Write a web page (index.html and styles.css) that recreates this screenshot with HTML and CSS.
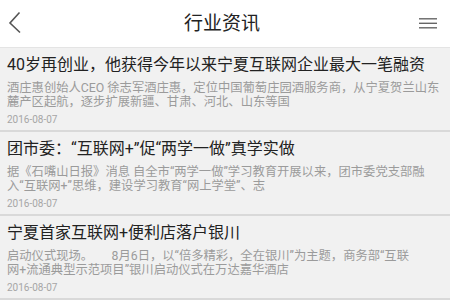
FILE: index.html
```html
<!DOCTYPE html>
<html lang="zh-CN">
<head>
<meta charset="utf-8">
<title>行业资讯</title>
<link rel="stylesheet" href="styles.css">
</head>
<body>
<header class="topbar">
  <svg class="back" width="16" height="26" viewBox="0 0 16 26"><polyline points="13.5,1.5 4,12 14,21.5" fill="none" stroke="#555" stroke-width="1.6"/></svg>
  <h1 class="title">行业资讯</h1>
  <svg class="menu" width="20" height="14" viewBox="0 0 20 14"><g stroke="#666" stroke-width="1.4"><line x1="1" y1="1.8" x2="19" y2="1.8"/><line x1="1" y1="6.3" x2="19" y2="6.3"/><line x1="1" y1="10.8" x2="19" y2="10.8"/></g></svg>
</header>
<main class="list">
  <article class="item">
    <h2 class="item-title">40岁再创业，他获得今年以来宁夏互联网企业最大一笔融资</h2>
    <p class="item-desc">酒庄惠创始人CEO 徐志军酒庄惠，定位中国葡萄庄园酒服务商，从宁夏贺兰山东<br>麓产区起航，逐步扩展新疆、甘肃、河北、山东等国</p>
    <div class="item-date">2016-08-07</div>
  </article>
  <article class="item">
    <h2 class="item-title">团市委：“互联网+”促“两学一做”真学实做</h2>
    <p class="item-desc">据《石嘴山日报》消息 自全市“两学一做”学习教育开展以来，团市委党支部融<br>入“互联网+”思维，建设学习教育“网上学堂”、志</p>
    <div class="item-date">2016-08-07</div>
  </article>
  <article class="item">
    <h2 class="item-title">宁夏首家互联网+便利店落户银川</h2>
    <p class="item-desc">启动仪式现场。　　8月6日，以“倍多精彩，全在银川”为主题，商务部“互联<br>网+流通典型示范项目”银川启动仪式在万达嘉华酒店</p>
    <div class="item-date">2016-08-07</div>
  </article>
</main>
</body>
</html>
```

FILE: styles.css
```css
* {
  box-sizing: border-box;
}

html, body {
  margin: 0;
  padding: 0;
}

body {
  background: #f1f1f1;
  font-family: Roboto, "Noto Sans CJK SC", sans-serif;
  color: #262626;
  overflow: hidden;
}

.topbar {
  height: 48px;
  background: #fff;
  border-bottom: 1px solid #e4e4e4;
  display: grid;
  grid-template-columns: 1fr auto 1fr;
  align-items: center;
  padding: 0 12px 0 6px;
}

.back {
  display: block;
  justify-self: start;
}

.menu {
  display: block;
  justify-self: end;
}

.title {
  margin: 0;
  font-size: 19px;
  line-height: 24px;
  font-weight: normal;
  color: #222;
}

.item {
  padding: 7px 7px 4px;
  border-bottom: 2px solid #d9d9d9;
}

.item-title {
  margin: 0;
  font-size: 16px;
  line-height: 20px;
  font-weight: normal;
  color: #222;
  white-space: nowrap;
}

.item-desc {
  margin: 6px 0 0;
  font-size: 12.3px;
  line-height: 14px;
  color: #9b9b9b;
  white-space: nowrap;
}

.item-date {
  margin-top: 5px;
  font-size: 10px;
  line-height: 12px;
  color: #a6a6a6;
}
```
